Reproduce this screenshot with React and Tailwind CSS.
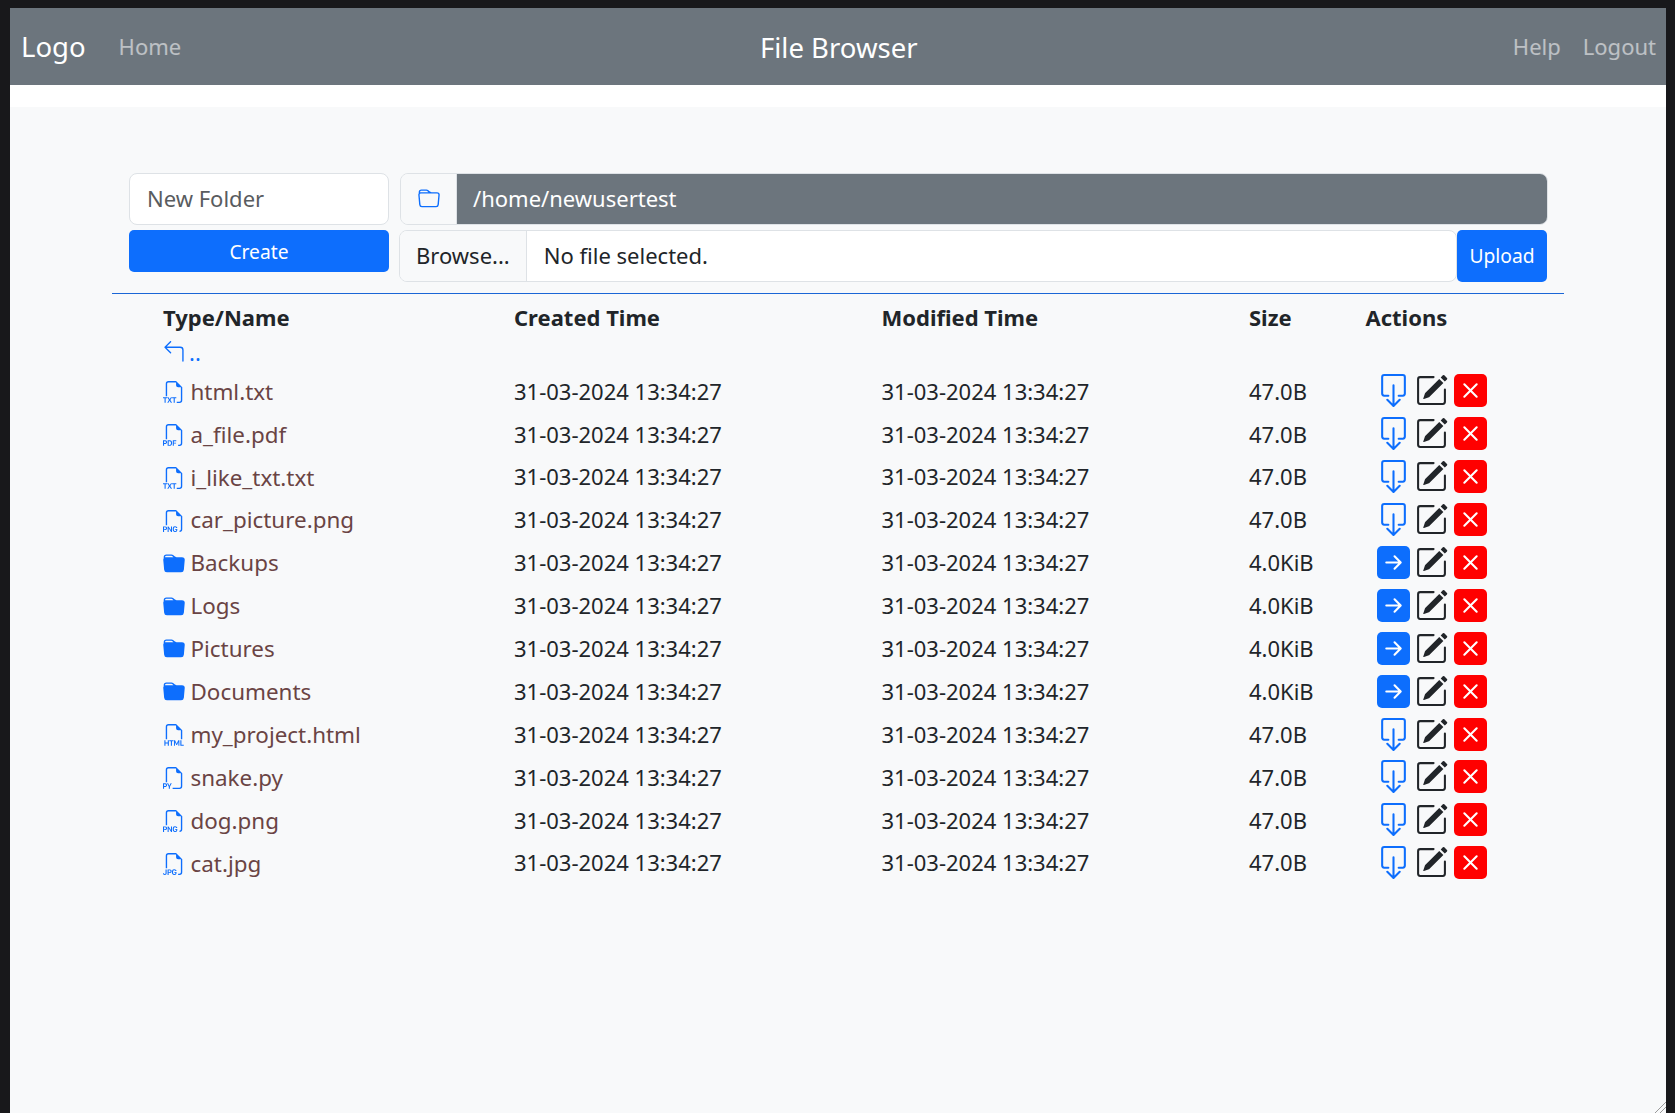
import React from "react";
import {
  BsFiletypeTxt, BsFiletypePdf, BsFiletypePng, BsFiletypeHtml, BsFiletypePy, BsFiletypeJpg,
  BsFolderFill, BsFolder, BsArrow90DegLeft, BsBoxArrowDown, BsPencilSquare, BsX, BsArrowRightShort,
} from "react-icons/bs";

const rows = [
  ["html.txt", BsFiletypeTxt, "47.0B"],
  ["a_file.pdf", BsFiletypePdf, "47.0B"],
  ["i_like_txt.txt", BsFiletypeTxt, "47.0B"],
  ["car_picture.png", BsFiletypePng, "47.0B"],
  ["Backups", BsFolderFill, "4.0KiB", true],
  ["Logs", BsFolderFill, "4.0KiB", true],
  ["Pictures", BsFolderFill, "4.0KiB", true],
  ["Documents", BsFolderFill, "4.0KiB", true],
  ["my_project.html", BsFiletypeHtml, "47.0B"],
  ["snake.py", BsFiletypePy, "47.0B"],
  ["dog.png", BsFiletypePng, "47.0B"],
  ["cat.jpg", BsFiletypeJpg, "47.0B"],
];

const gridCols = "grid grid-cols-[351px_367.5px_367.5px_116.5px_1fr] items-center";

export default function App() {
  return (
    <div className="relative h-[1113px] overflow-hidden bg-[#18181b] pt-[8px] pl-[10px] pr-[9px] font-['Noto_Sans',sans-serif] text-[22px] text-[#212529]">
      <div className="flex h-[1105px] flex-col bg-white">
        <nav className="relative flex h-[77px] shrink-0 items-center bg-[#6c757d] pl-[11px] pr-[10px]">
          <span className="text-[27.5px] text-white">Logo</span>
          <span className="ml-[33px] text-white/55">Home</span>
          <span className="absolute left-[750px] top-[19px] text-[27.5px] text-white">File Browser</span>
          <span className="ml-auto text-white/55">Help</span>
          <span className="ml-[22px] text-white/55">Logout</span>
        </nav>
        <div className="h-[22px] shrink-0 bg-white" />
        <main className="relative flex-1 bg-[#f8f9fa] px-[102px] pt-[66px]">
          <div className="mx-[17px] flex gap-[10px]">
            <div className="flex w-[260px] shrink-0 flex-col gap-[5px]">
              <div className="flex h-[52px] items-center rounded-[8px] border border-[#dee2e6] bg-white px-[17px] pb-[2px] text-[#595c5f]">New Folder</div>
              <button className="h-[42px] rounded-[5px] bg-[#0d6efd] pt-[2px] text-[19.25px] text-white">Create</button>
            </div>
            <div className="flex flex-1 flex-col gap-[5px]">
              <div className="-mr-[1px] ml-[1px] flex h-[52px] overflow-hidden rounded-[8px] border border-[#dee2e6]">
                <div className="flex w-[56px] items-center justify-center border-r border-[#dee2e6] bg-[#f8f9fa] text-[#0d6efd]">
                  <BsFolder size={22} />
                </div>
                <div className="flex flex-1 items-center bg-[#6c757d] px-[16px] pb-[2px] text-white">/home/newusertest</div>
              </div>
              <div className="flex h-[52px]">
                <div className="flex flex-1 overflow-hidden rounded-[8px] border border-[#dee2e6] bg-white">
                  <div className="flex items-center border-r border-[#dee2e6] bg-[#f8f9fa] px-[16px] pb-[2px]">Browse...</div>
                  <div className="flex items-center px-[17px] pb-[2px]">No file selected.</div>
                </div>
                <button className="w-[90px] rounded-[5px] bg-[#0d6efd] text-[19.25px] text-white">Upload</button>
              </div>
            </div>
          </div>
          <div className="mt-[11px] border-t border-[#1b66d6]" />
          <div className="pl-[51px]">
            <div className={`${gridCols} h-[47px] font-bold`}>
              <div>Type/Name</div>
              <div>Created Time</div>
              <div>Modified Time</div>
              <div>Size</div>
              <div>Actions</div>
            </div>
            <div className="flex h-[28px] items-center text-[#0d6efd]">
              <BsArrow90DegLeft size={22} className="-mt-[7px] shrink-0" />
              <span className="ml-[4px] -mt-[5px]">..</span>
            </div>
            <div className="pt-[0.7px]">
              {rows.map(([name, Icon, size, isDir], i) => (
                <div key={i} className={`${gridCols} h-[42.9px]`}>
                  <div className="flex items-center">
                    <Icon size={22} className="mt-[2px] shrink-0 text-[#0d6efd]" />
                    <span className="ml-[5.5px] mt-[0.8px] text-[22.4px] text-[#6a4444]">{name}</span>
                  </div>
                  <div>31-03-2024 13:34:27</div>
                  <div>31-03-2024 13:34:27</div>
                  <div>{size}</div>
                  <div className="-mt-[0.4px] ml-[11px] flex items-center">
                    <span className={`flex h-[33px] w-[33px] items-center justify-center rounded-[5px] ${isDir ? "bg-[#0d6efd] text-white" : "text-[#0d6efd]"}`}>
                      {isDir ? <BsArrowRightShort size={33} /> : <BsBoxArrowDown size={33} />}
                    </span>
                    <span className="ml-[5px] flex h-[33px] w-[33px] items-center justify-center text-[#212529]">
                      <BsPencilSquare size={33} />
                    </span>
                    <span className="ml-[6px] flex h-[33px] w-[33px] items-center justify-center rounded-[5px] bg-[#ff0000] text-white">
                      <BsX size={33} />
                    </span>
                  </div>
                </div>
              ))}
            </div>
          </div>
          <svg className="absolute bottom-0 right-0 text-[#9a9a9a]" width="12" height="12" viewBox="0 0 12 12" stroke="currentColor" fill="none">
            <path d="M1 12 L12 1 M6 12 L12 6" />
          </svg>
        </main>
      </div>
    </div>
  );
}
